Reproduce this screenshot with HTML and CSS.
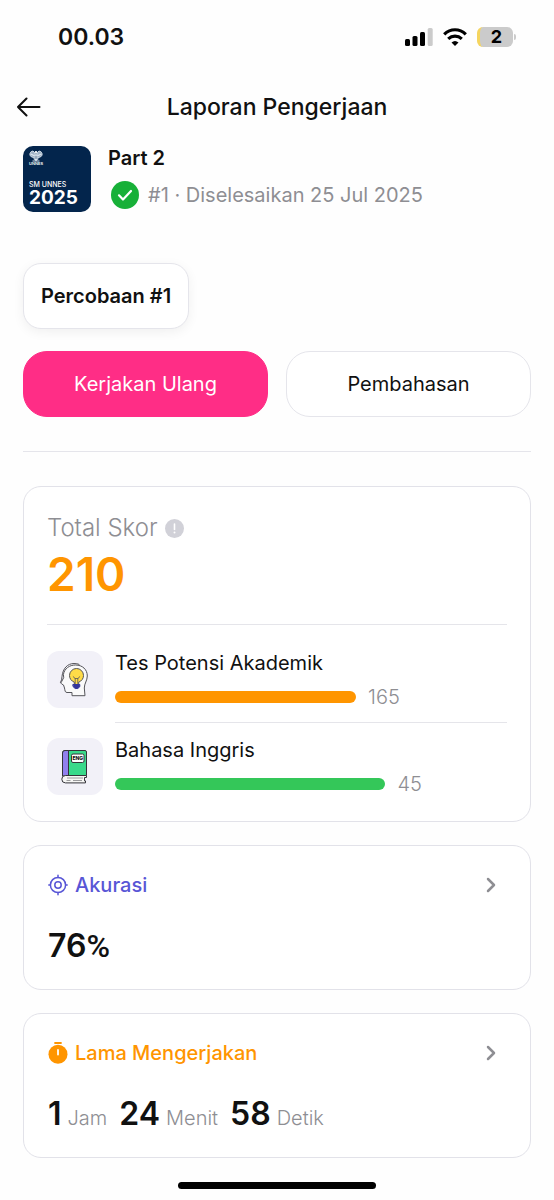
FILE: index.html
```html
<!DOCTYPE html>
<html lang="id">
<head>
<meta charset="utf-8">
<meta name="viewport" content="width=device-width, initial-scale=1">
<title>Laporan Pengerjaan</title>
<link rel="stylesheet" href="styles.css">
</head>
<body>
<div class="status-bar">
  <time class="status-time">00.03</time>
  <div class="status-icons">
    <svg class="signal" width="28" height="18" viewBox="0 0 28 18" aria-hidden="true">
      <rect x="0" y="11" width="5" height="7" rx="1.5"/>
      <rect x="7.5" y="8" width="5" height="10" rx="1.5"/>
      <rect x="15" y="4" width="5" height="14" rx="1.5"/>
      <rect x="22.7" y="0" width="5" height="18" rx="1.5" fill="#cbcbcb"/>
    </svg>
    <svg class="wifi" width="24" height="18" viewBox="0 0 24 18" fill="none" stroke="#000" stroke-width="3.2" aria-hidden="true">
      <path d="M1.2 6.3C7.500 .2 16.500 .2 22.800 6.300"/>
      <path d="M5.200 10.900C9.200 7.300 14.800 7.300 18.800 10.900"/>
      <path d="M12 18 8.500 14.400Q12 11.400 15.500 14.400Z" fill="#000" stroke="none"/>
    </svg>
    <div class="battery"><span class="battery-body">2</span><span class="battery-tip"></span></div>
  </div>
</div>

<header class="header">
  <button class="back" type="button" aria-label="Kembali">
    <svg width="24" height="20" viewBox="0 0 24 20" fill="none" stroke="#111" stroke-width="2" stroke-linecap="round" stroke-linejoin="round" aria-hidden="true"><path d="M22.500 10H1M9.500 1.500 1 10l8.500 8.500"/></svg>
  </button>
  <h1 class="title">Laporan Pengerjaan</h1>
</header>

<main class="content">
  <section class="exam">
    <div class="cover">
      <div class="crest">
        <svg width="14" height="12" viewBox="0 0 12 12" preserveAspectRatio="none" fill="none" stroke="#dce5ee" aria-hidden="true">
          <path d="M5.300 8Q0 7 .8 3.500Q1.500 1 3.400 1Q5.500 2 5.500 6M6.700 8Q12 7 11.200 3.500Q10.500 1 8.600 1Q6.500 2 6.500 6" fill="#9fb1c5" stroke-width=".8"/>
          <path d="M6 2v9M3 11h6M1.500 4l3.500 2M10.500 4 7 6M4 8.500 6 10l2-1.500"/>
          <circle cx="6" cy="2" r="1" fill="#fff" stroke="none"/>
        </svg>
        <span class="crest-name">UNNES</span>
      </div>
      <div class="cover-text"><span class="cover-label">SM UNNES</span><strong class="cover-year">2025</strong></div>
    </div>
    <div class="exam-info">
      <h2 class="exam-name">Part 2</h2>
      <p class="exam-status">
        <svg width="28" height="28" viewBox="0 0 28 28" fill="none" aria-hidden="true"><circle cx="14" cy="14" r="14" fill="#17b038"/><path d="m8 14.300 4 4.200 8-8.500" stroke="#fff" stroke-width="2.200" stroke-linecap="round" stroke-linejoin="round"/></svg>
        <span>#1 · Diselesaikan 25 Jul 2025</span>
      </p>
    </div>
  </section>

  <button class="attempt" type="button">Percobaan #1</button>

  <div class="actions">
    <button class="action action-primary" type="button">Kerjakan Ulang</button>
    <button class="action" type="button">Pembahasan</button>
  </div>

  <hr class="divider">

  <section class="card score">
    <div class="score-label">
      <h2 class="score-heading">Total Skor</h2>
      <button class="info" type="button" aria-label="Info skor">
        <svg width="19" height="19" viewBox="0 0 19 19" aria-hidden="true"><circle cx="9.500" cy="9.500" r="9.500" fill="#d1d1d8"/><path d="M9.500 5v5.500" stroke="#fff" stroke-width="1.600" stroke-linecap="round"/><circle cx="9.500" cy="13.500" r="1" fill="#fff"/></svg>
      </button>
    </div>
    <p class="score-value">210</p>
    <ul class="subjects">
      <li class="subject">
        <div class="subject-icon">
          <svg width="32" height="36" viewBox="0 0 32 36" fill="none" stroke="#55555a" stroke-linecap="round" stroke-linejoin="round" aria-hidden="true">
            <path d="M4.500 12C5.500 6.500 10.500 3 16.500 3c7 0 11.800 4.500 11.800 11 0 4.500-3 7.500-3 12l.7 7.700H13v-3.200H8c-2 0-2-2-2.500-4.500l-1-3-1.800-1c-1-.8-.6-1.500 0-2.500L4.500 16z" fill="#fafafa"/>
            <path d="M1.500 20.500Q3 18 3 14.500C3.800 6.500 8.500 1.500 15 1.500q3 0 5 .8"/>
            <path d="M15.300 23v-2.800c-3-1.300-4.800-3.600-4.800-6.700a7 7 0 0 1 14 0c0 3.100-1.800 5.400-4.800 6.700V23z" fill="#ffdc48"/>
            <path d="M16.200 22v-5.500l-2-1.800M18.800 22v-5.500l2-1.800M16.200 16.500h2.600" stroke-width=".8"/>
            <path d="M14.200 22.500h6.600v2.200l-2 1.800h-2.600l-2-1.800z" fill="#34359b" stroke="#34359b"/>
          </svg>
        </div>
        <div class="subject-body">
          <h3 class="subject-name">Tes Potensi Akademik</h3>
          <div class="subject-score"><span class="bar bar-orange" style="width:61.5%"></span><span>165</span></div>
        </div>
      </li>
      <li class="subject">
        <div class="subject-icon">
          <svg width="30" height="36" viewBox="0 0 30 36" stroke="#34343a" stroke-linejoin="round" aria-hidden="true">
            <path d="M5 1.500H25q1.500 0 1.500 1.500v23.500h-24V4q0-2.500 2.500-2.500z" fill="#39d98a"/>
            <path d="M5 1.500H8.500V27h-6V4q0-2.500 2.500-2.500z" fill="#9180ee"/>
            <path d="M26.500 26.500H5.500a3.700 3.700 0 0 0 0 7.400H25.500v-2H24.500v-3.400h2z" fill="#f7f7f5"/>
            <path d="M7 29h16M6.500 31.500h4M13 31.500h9" stroke="#9a9a9c" fill="none"/>
            <rect x="11.500" y="5" width="12.500" height="8.500" rx="1.500" fill="#fff"/>
            <text x="17.700" y="11" text-anchor="middle" class="book-label">ENG</text>
          </svg>
        </div>
        <div class="subject-body">
          <h3 class="subject-name">Bahasa Inggris</h3>
          <div class="subject-score"><span class="bar bar-green" style="width:69%"></span><span>45</span></div>
        </div>
      </li>
    </ul>
  </section>

  <section class="card stat">
    <a class="stat-link stat-accuracy" href="#akurasi">
      <svg width="20" height="22" viewBox="0 0 20 22" fill="none" stroke="currentColor" stroke-width="1.500" stroke-linecap="round" aria-hidden="true"><circle cx="10" cy="11" r="7.600"/><circle cx="10" cy="11" r="3.200"/><path d="M10 1.200v2.200M10 18.600v2.200M.8 11H2.400M17.600 11h1.600"/></svg>
      <h2 class="stat-title">Akurasi</h2>
      <svg class="chevron" width="10" height="16" viewBox="0 0 10 16" fill="none" aria-hidden="true"><path d="m2 2 6 6-6 6"/></svg>
    </a>
    <p class="stat-value" id="akurasi"><strong>76<span class="percent">%</span></strong></p>
  </section>

  <section class="card stat">
    <a class="stat-link stat-duration" href="#durasi">
      <svg width="20" height="22" viewBox="0 0 20 22" fill="currentColor" aria-hidden="true"><circle cx="10" cy="12.300" r="9.500"/><rect x="6.200" y="0" width="7.600" height="2" rx=".7"/><path d="M10 8v4.500" stroke="#fff" stroke-width="1.800" stroke-linecap="round"/></svg>
      <h2 class="stat-title">Lama Mengerjakan</h2>
      <svg class="chevron" width="10" height="16" viewBox="0 0 10 16" fill="none" aria-hidden="true"><path d="m2 2 6 6-6 6"/></svg>
    </a>
    <p class="stat-value" id="durasi">
      <span class="unit"><strong>1</strong><span>Jam</span></span>
      <span class="unit"><strong>24</strong><span>Menit</span></span>
      <span class="unit"><strong>58</strong><span>Detik</span></span>
    </p>
  </section>
</main>
<div class="home-indicator"></div>
</body>
</html>
```
FILE: styles.css
```css
* { box-sizing: border-box; }

body {
  margin: 0;
  background: #fefefe;
  color: #111;
  font-family: Inter, "Liberation Sans", sans-serif;
  font-size: 20px;
  line-height: 24px;
}

h1, h2, h3, p, ul { margin: 0; padding: 0; }
button { font: inherit; color: inherit; cursor: pointer; }
svg { display: block; flex: none; }

.status-bar {
  display: flex;
  align-items: center;
  justify-content: space-between;
  height: 74px;
  padding: 0 38px 0 58px;
}
.status-time { font-size: 23px; font-weight: 600; line-height: 28px; }
.status-icons { display: flex; align-items: center; gap: 10px; }
.battery { display: flex; align-items: center; gap: 1px; }
.battery-body {
  width: 36px;
  height: 20px;
  border-left: 3px solid #f5d55f;
  border-radius: 6px;
  background: #cbcbcb;
  color: #000;
  font-size: 18px;
  font-weight: 700;
  line-height: 20px;
  text-align: center;
}
.battery-tip { width: 2px; height: 6px; border-radius: 0 2px 2px 0; background: #cbcbcb; }

.header {
  display: grid;
  grid-template-columns: 24px 1fr 24px;
  align-items: center;
  height: 66px;
  padding: 0 17px;
}
.back { padding: 0; border: 0; background: none; }
.title { font-size: 23px; font-weight: 500; line-height: 28px; text-align: center; }

.content { display: flex; flex-direction: column; padding: 6px 23px 0; }

.exam { display: flex; align-items: flex-start; gap: 17px; }
.cover {
  display: flex;
  flex: none;
  flex-direction: column;
  justify-content: space-between;
  width: 68px;
  height: 66px;
  padding: 4px 6px 5px;
  border-radius: 10px;
  background: #03254c;
  color: #fff;
}
.crest { display: flex; flex-direction: column; align-items: center; align-self: flex-start; }
.crest-name { font-size: 4px; font-weight: 600; line-height: 4px; }
.cover-text { display: flex; flex-direction: column; }
.cover-label { font-size: 7px; font-weight: 500; line-height: 8px; }
.cover-year { font-size: 19px; font-weight: 700; line-height: 18px; }
.exam-info { display: flex; flex-direction: column; gap: 11px; }
.exam-name { font-size: 20px; font-weight: 600; line-height: 24px; }
.exam-status { display: flex; align-items: center; gap: 9px; margin-left: 3px; color: #8e8e93; line-height: 28px; }

.attempt {
  align-self: flex-start;
  height: 66px;
  margin-top: 51px;
  padding: 0 17px;
  border: 1px solid #e5e5eb;
  border-radius: 18px;
  background: #fff;
  box-shadow: 0 3px 12px rgba(0, 0, 0, .06);
  font-weight: 600;
}

.actions { display: grid; grid-template-columns: 1fr 1fr; gap: 18px; margin-top: 22px; }
.action { height: 66px; border: 1px solid #e5e5eb; border-radius: 24px; background: #fff; }
.action-primary { border-color: #ff2d86; background: #ff2d86; color: #fff; }

.divider { width: 100%; margin: 34px 0; border: 0; border-top: 1px solid #e5e5eb; }

.card { border: 1px solid #e2e2e9; border-radius: 18px; background: #fff; }
.score { padding: 27px 23px 25px; }
.score-label { display: flex; align-items: center; gap: 7px; }
.score-heading { color: #8e8e93; font-size: 24px; font-weight: 300; line-height: 28px; }
.info { padding: 0; border: 0; background: none; }
.score-value { color: #ff9500; font-size: 46px; font-weight: 600; line-height: 64px; }
.subjects {
  display: flex;
  flex-direction: column;
  gap: 15px;
  margin-top: 18px;
  padding-top: 26px;
  border-top: 1px solid #e5e5ea;
  list-style: none;
}
.subject { display: flex; gap: 12px; }
.subject-icon {
  display: flex;
  flex: none;
  align-items: center;
  justify-content: center;
  width: 56px;
  height: 57px;
  border-radius: 12px;
  background: #f2f1f8;
}
.subject-body { display: flex; flex: 1; flex-direction: column; gap: 10px; min-width: 0; }
.subject:not(:last-child) .subject-body { padding-bottom: 13px; border-bottom: 1px solid #e5e5ea; }
.subject-name { font-size: 20px; font-weight: 400; line-height: 24px; }
.subject-score { display: flex; align-items: center; gap: 12px; color: #8e8e93; font-weight: 300; }
.bar { height: 12px; border-radius: 6px; }
.bar-orange { background: #ff9500; }
.bar-green { background: #34c759; }
.book-label { fill: #111; stroke: none; font-size: 5px; font-weight: 800; }

.stat { margin-top: 23px; padding: 27px 24px 23px; }
.stat-link { display: flex; align-items: center; gap: 7px; text-decoration: none; }
.stat-title { font-size: 20px; font-weight: 500; line-height: 24px; }
.stat-accuracy { color: #5856d6; }
.stat-duration { color: #ff9500; }
.chevron { margin-left: auto; margin-right: 10px; stroke: #8e8e93; stroke-width: 2.5; stroke-linecap: round; stroke-linejoin: round; }
.stat-value { display: flex; align-items: flex-start; gap: 12px; height: 40px; margin-top: 29px; line-height: 40px; }
.stat-value strong { font-size: 32px; font-weight: 600; }
.stat-value .percent { font-family: Roboto, Inter, sans-serif; font-weight: 500; }
.unit { display: flex; align-items: baseline; gap: 6px; color: #8e8e93; font-weight: 300; }
.unit strong { color: #111; }

.home-indicator { width: 198px; height: 7px; margin: 24px auto 0; border-radius: 4px; background: #000; }
```
